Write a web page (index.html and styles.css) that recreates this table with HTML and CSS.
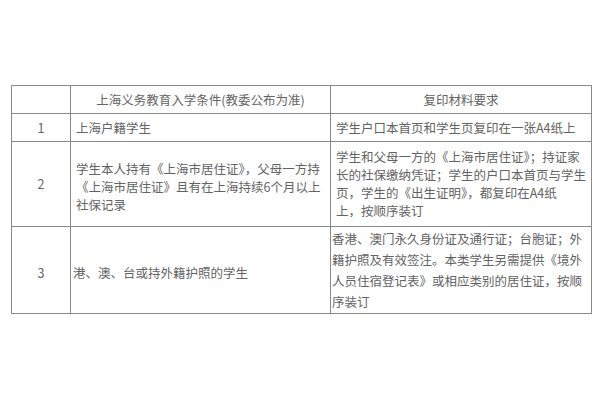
FILE: index.html
```html
<!DOCTYPE html>
<html lang="zh-CN">
<head>
<meta charset="utf-8">
<link rel="stylesheet" href="styles.css">
</head>
<body>
<table class="req">
  <colgroup>
    <col class="c-num">
    <col class="c-cond">
    <col class="c-mat">
  </colgroup>
  <tr class="r-head">
    <td></td>
    <td class="center">上海义务教育入学条件(教委公布为准)</td>
    <td class="center">复印材料要求</td>
  </tr>
  <tr class="r-1">
    <td class="center">1</td>
    <td class="cond">上海户籍学生</td>
    <td class="mat">学生户口本首页和学生页复印在一张A4纸上</td>
  </tr>
  <tr class="r-2">
    <td class="center">2</td>
    <td class="cond low">学生本人持有《上海市居住证》，父母一方持<br>《上海市居住证》且有在上海持续6个月以上<br>社保记录</td>
    <td class="mat">学生和父母一方的《上海市居住证》；持证家<br>长的社保缴纳凭证；学生的户口本首页与学生<br>页，学生的《出生证明》，都复印在A4纸<br>上，按顺序装订</td>
  </tr>
  <tr class="r-3">
    <td class="center low">3</td>
    <td class="cond tight low">港、澳、台或持外籍护照的学生</td>
    <td class="mat flush">香港、澳门永久身份证及通行证；台胞证；外<br>籍护照及有效签注。本类学生另需提供《境外<br>人员住宿登记表》或相应类别的居住证，按顺<br>序装订</td>
  </tr>
</table>
</body>
</html>
```
FILE: styles.css
```css
html, body {
  margin: 0;
  padding: 0;
  background: #ffffff;
}
body {
  font-family: "Noto Sans CJK SC", "Noto Sans", sans-serif;
  font-size: 12.5px;
  color: #636363;
}
.req {
  border-collapse: collapse;
  margin: 85px 0 0 11px;
  table-layout: fixed;
  width: 581px;
}
.c-num { width: 59px; }
.c-cond { width: 260px; }
.c-mat { width: 261px; }
.req td {
  border: 1px solid #8a8a8a;
  padding: 0 4px 0 5px;
  vertical-align: middle;
  line-height: 18px;
  white-space: nowrap;
  overflow: hidden;
}
.req td.center {
  text-align: center;
  padding: 0;
}
.r-head { height: 28px; }
.r-1 { height: 28px; }
.r-2 { height: 85px; }
.r-3 { height: 87px; }
.req td.low { padding-top: 5px; }
.req td.tight { padding-left: 2px; }
.req td.flush {
  padding-left: 1px;
  line-height: 21px;
}
```
